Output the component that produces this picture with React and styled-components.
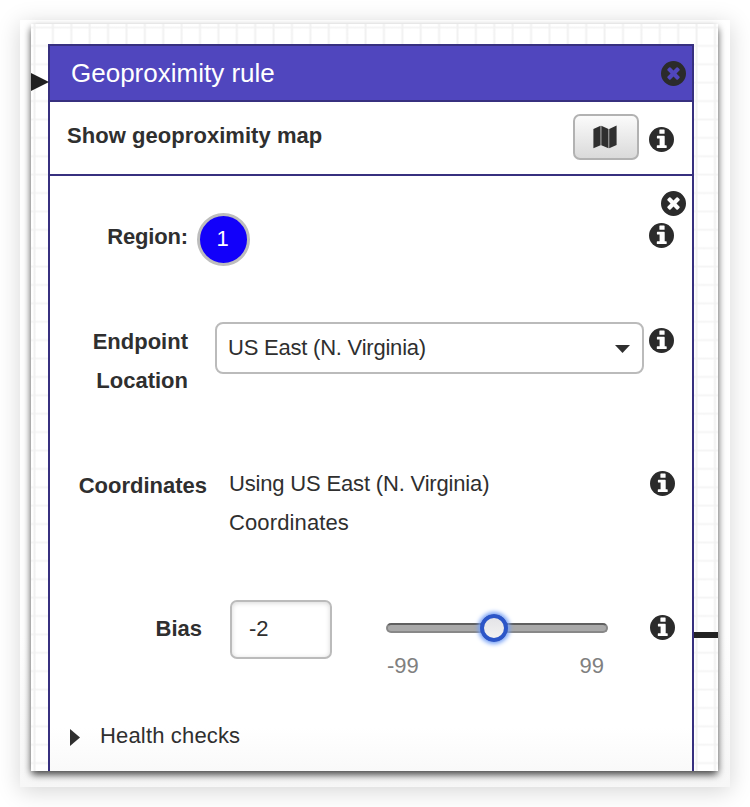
import React from 'react';
import styled, { createGlobalStyle } from 'styled-components';

const ink = '#2f2f2f';
const indigo = '#37307f';

const GlobalStyle = createGlobalStyle`
  *, *::before, *::after { box-sizing: border-box; }
  body {
    margin: 0;
    background: #fff;
    color: ${ink};
    font-family: "Liberation Sans", Arial, Helvetica, sans-serif;
    font-size: 22px;
    line-height: 39px;
  }
`;

const Page = styled.main`
  height: 807px;
  padding: 20px;
  overflow: hidden;
`;

const Frame = styled.div`
  width: 710px;
  height: 767px;
  padding: 4px 12px 16px 11px;
  background: linear-gradient(#fff 80%, #f7f7f7);
  box-shadow: 0 4px 22px rgba(0, 0, 0, 0.17);
`;

const Canvas = styled.section`
  position: relative;
  height: 747px;
  padding: 20px 24px 0 17px;
  background-color: #fff;
  background-image:
    linear-gradient(90deg, transparent, #f1f1f1 1px, #f1f1f1 2px, transparent 3px),
    linear-gradient(transparent, #f5f5f5 1px, #f5f5f5 2px, transparent 3px);
  background-size: 18.4px 18.4px;
  background-position: 2px 0, 0 2px;
  box-shadow: 0 4px 8px -1px rgba(0, 0, 0, 0.7), 0 3px 7px rgba(0, 0, 0, 0.2);
`;

const Connector = styled.div`
  position: absolute;
  top: 608px;
  right: 0;
  width: 24px;
  height: 6px;
  background: #222;
`;

const ArrowHead = styled.svg`
  position: absolute;
  top: 49px;
  left: 0;
  width: 18px;
  height: 18px;
  fill: #202020;
`;

const Panel = styled.article`
  height: 727px;
  border: solid ${indigo};
  border-width: 2px 2px 0;
  background: linear-gradient(#fff 94%, #f9f9f9);
`;

const Header = styled.header`
  display: flex;
  align-items: center;
  justify-content: space-between;
  height: 56px;
  padding: 0 6px 0 21px;
  border-bottom: 2px solid ${indigo};
  background: #5046be;
`;

const Title = styled.h1`
  margin: 0;
  color: #fff;
  font-size: 26px;
  font-weight: 400;
`;

const MapRow = styled.div`
  display: flex;
  align-items: flex-start;
  height: 74px;
  padding: 12px 18px 0 17px;
  border-bottom: 2px solid ${indigo};
`;

const MapLabel = styled.strong`
  flex: 1;
  line-height: 44px;
  letter-spacing: 0.05px;
`;

const MapButton = styled.button`
  display: grid;
  place-items: center;
  width: 66px;
  height: 46px;
  margin-right: 10px;
  padding: 0 3px 0 0;
  border: 2px solid #b2b2b2;
  border-radius: 7px;
  background: linear-gradient(#fbfbfb, #dadada);
`;

const Glyph = styled.svg`
  display: block;
  flex: none;
  width: 25px;
  height: 25px;
  margin-top: ${(p) => p.$top || 0}px;
  fill: #2b2b2b;
`;

const CloseRow = styled.div`
  display: flex;
  justify-content: flex-end;
  height: 40px;
  padding: 15px 6px 0 0;
`;

const Field = styled.div`
  display: grid;
  grid-template-columns: ${(p) => p.$columns};
  align-items: start;
  height: ${(p) => p.$height}px;
`;

const Label = styled.strong`
  margin-top: ${(p) => p.$top}px;
  text-align: right;
  letter-spacing: ${(p) => p.$spacing || 0}px;
`;

const RegionBadge = styled.div`
  display: grid;
  place-items: center;
  width: 53px;
  height: 53px;
  margin: -3px 0 0 9px;
  padding: 0 2px 2px 0;
  border: 3.5px solid #bdbdbd;
  border-radius: 50%;
  background: #1200fa;
  color: #fff;
`;

const Select = styled.div`
  display: flex;
  align-items: center;
  justify-content: space-between;
  width: 429px;
  height: 52px;
  margin: 1px 0 0 27px;
  padding: 0 12px 2px 11px;
  border: 2px solid #bbb;
  border-radius: 8px;
  background: #fff;
  letter-spacing: -0.22px;
`;

const Caret = styled.svg`
  display: block;
  width: 15px;
  height: 8px;
  margin-top: 4px;
  fill: ${ink};
`;

const Value = styled.div`
  margin-left: 22px;
`;

const ValueLine = styled.div`
  letter-spacing: ${(p) => p.$spacing}px;
`;

const NumberInput = styled.input`
  width: 102px;
  height: 59px;
  margin-left: 28px;
  padding: 0 18px 1px 17px;
  border: 2px solid #bbb;
  border-radius: 7px;
  outline: 0;
  background: #fff;
  box-shadow: inset 0 1px 5px rgba(0, 0, 0, 0.16);
  color: ${ink};
  font: inherit;
`;

const Slider = styled.div`
  width: 222px;
  margin: 23px 0 0 54px;
`;

const Track = styled.div`
  position: relative;
  height: 10px;
  border: 2px solid #888;
  border-top-color: #606060;
  border-radius: 5px;
  background: #a9a9a9;
`;

const Thumb = styled.div`
  position: absolute;
  top: -11px;
  left: 92px;
  width: 28px;
  height: 28px;
  border: 4px solid #2c56c8;
  border-radius: 50%;
  background: linear-gradient(#e4e4e7, #f2f2f2);
  box-shadow: 0 0 4px 2px #78a2f6;
`;

const Range = styled.div`
  display: flex;
  justify-content: space-between;
  margin-top: 13px;
  padding: 0 4px 0 1px;
  color: #808080;
`;

const Disclosure = styled.div`
  display: flex;
  align-items: center;
  margin-top: -1px;
  padding-left: 20px;
  letter-spacing: 0.16px;
`;

const Triangle = styled.svg`
  width: 10px;
  height: 17px;
  margin: 3px 20px 0 0;
  fill: ${ink};
`;

const InfoIcon = ({ top }) => (
  <Glyph $top={top} viewBox="0 0 25 25" aria-label="Information">
    <circle cx="12.5" cy="12.5" r="12.5" />
    <g fill="#fff">
      <rect x="10.4" y="2.5" width="5.2" height="4.3" rx=".6" />
      <path d="M8.5 8.8h6.6q.6 0 .6.6v8.9h1.4q.6 0 .6.6v1.6q0 .6-.6.6H8.4q-.6 0-.6-.6v-1.6q0-.6.6-.6h2.2v-6.7H8.5q-.6 0-.6-.6V9.4q0-.6.6-.6z" />
    </g>
  </Glyph>
);

const CloseIcon = () => (
  <Glyph viewBox="128 128 1536 1536" aria-label="Close">
    <path
      fillRule="evenodd"
      d="M1277 1122q0-26-19-45l-181-181 181-181q19-19 19-45 0-27-19-46l-90-90q-19-19-46-19-26 0-45 19l-181 181-181-181q-19-19-45-19-27 0-46 19l-90 90q-19 19-19 46 0 26 19 45l181 181-181 181q-19 19-19 45 0 27 19 46l90 90q19 19 46 19 26 0 45-19l181-181 181 181q19 19 45 19 27 0 46-19l90-90q19-19 19-46zM1664 896a768 768 0 1 1-1536 0a768 768 0 1 1 1536 0z"
    />
  </Glyph>
);

const MapIcon = () => (
  <svg width="24" height="24" viewBox="0 0 24 24" fill={ink} aria-hidden="true">
    <path d="M.4 3.9 7.6.8v19.4L.4 23.2zM8.3.8l7.2 3.1v19.3l-7.2-3zM16.2 3.9 23.6.6V20l-7.4 3.2z" />
  </svg>
);

export default function App() {
  return (
    <>
      <GlobalStyle />
      <Page>
        <Frame>
          <Canvas>
            <Panel>
              <Header>
                <Title>Geoproximity rule</Title>
                <CloseIcon />
              </Header>
              <MapRow>
                <MapLabel>Show geoproximity map</MapLabel>
                <MapButton aria-label="Show map"><MapIcon /></MapButton>
                <InfoIcon top={13} />
              </MapRow>
              <CloseRow><CloseIcon /></CloseRow>
              <Field $columns="138px 460.5px 25px" $height={105}>
                <Label $top={1} $spacing={-0.15}>Region:</Label>
                <RegionBadge>1</RegionBadge>
                <InfoIcon top={7} />
              </Field>
              <Field $columns="138px 460.5px 25px" $height={143}>
                <Label $top={1}>Endpoint<br />Location</Label>
                <Select>
                  US East (N. Virginia)
                  <Caret viewBox="0 0 15 8"><path d="M0 0h15L7.5 8z" /></Caret>
                </Select>
                <InfoIcon top={7} />
              </Field>
              <Field $columns="157px 443px 25px" $height={136}>
                <Label $top={2}>Coordinates</Label>
                <Value>
                  <ValueLine $spacing={-0.17}>Using US East (N. Virginia)</ValueLine>
                  <ValueLine $spacing={0.12}>Coordinates</ValueLine>
                </Value>
                <InfoIcon top={7} />
              </Field>
              <Field $columns="152px 130px 318px 25px" $height={117}>
                <Label $top={9}>Bias</Label>
                <NumberInput defaultValue="-2" aria-label="Bias" />
                <Slider>
                  <Track><Thumb /></Track>
                  <Range><span>-99</span><span>99</span></Range>
                </Slider>
                <InfoIcon top={15} />
              </Field>
              <Disclosure>
                <Triangle viewBox="0 0 10 17"><path d="M0 0 10 8.5 0 17z" /></Triangle>
                Health checks
              </Disclosure>
            </Panel>
            <ArrowHead viewBox="0 0 18 18"><path d="M0 0 18 9 0 18z" /></ArrowHead>
            <Connector />
          </Canvas>
        </Frame>
      </Page>
    </>
  );
}
